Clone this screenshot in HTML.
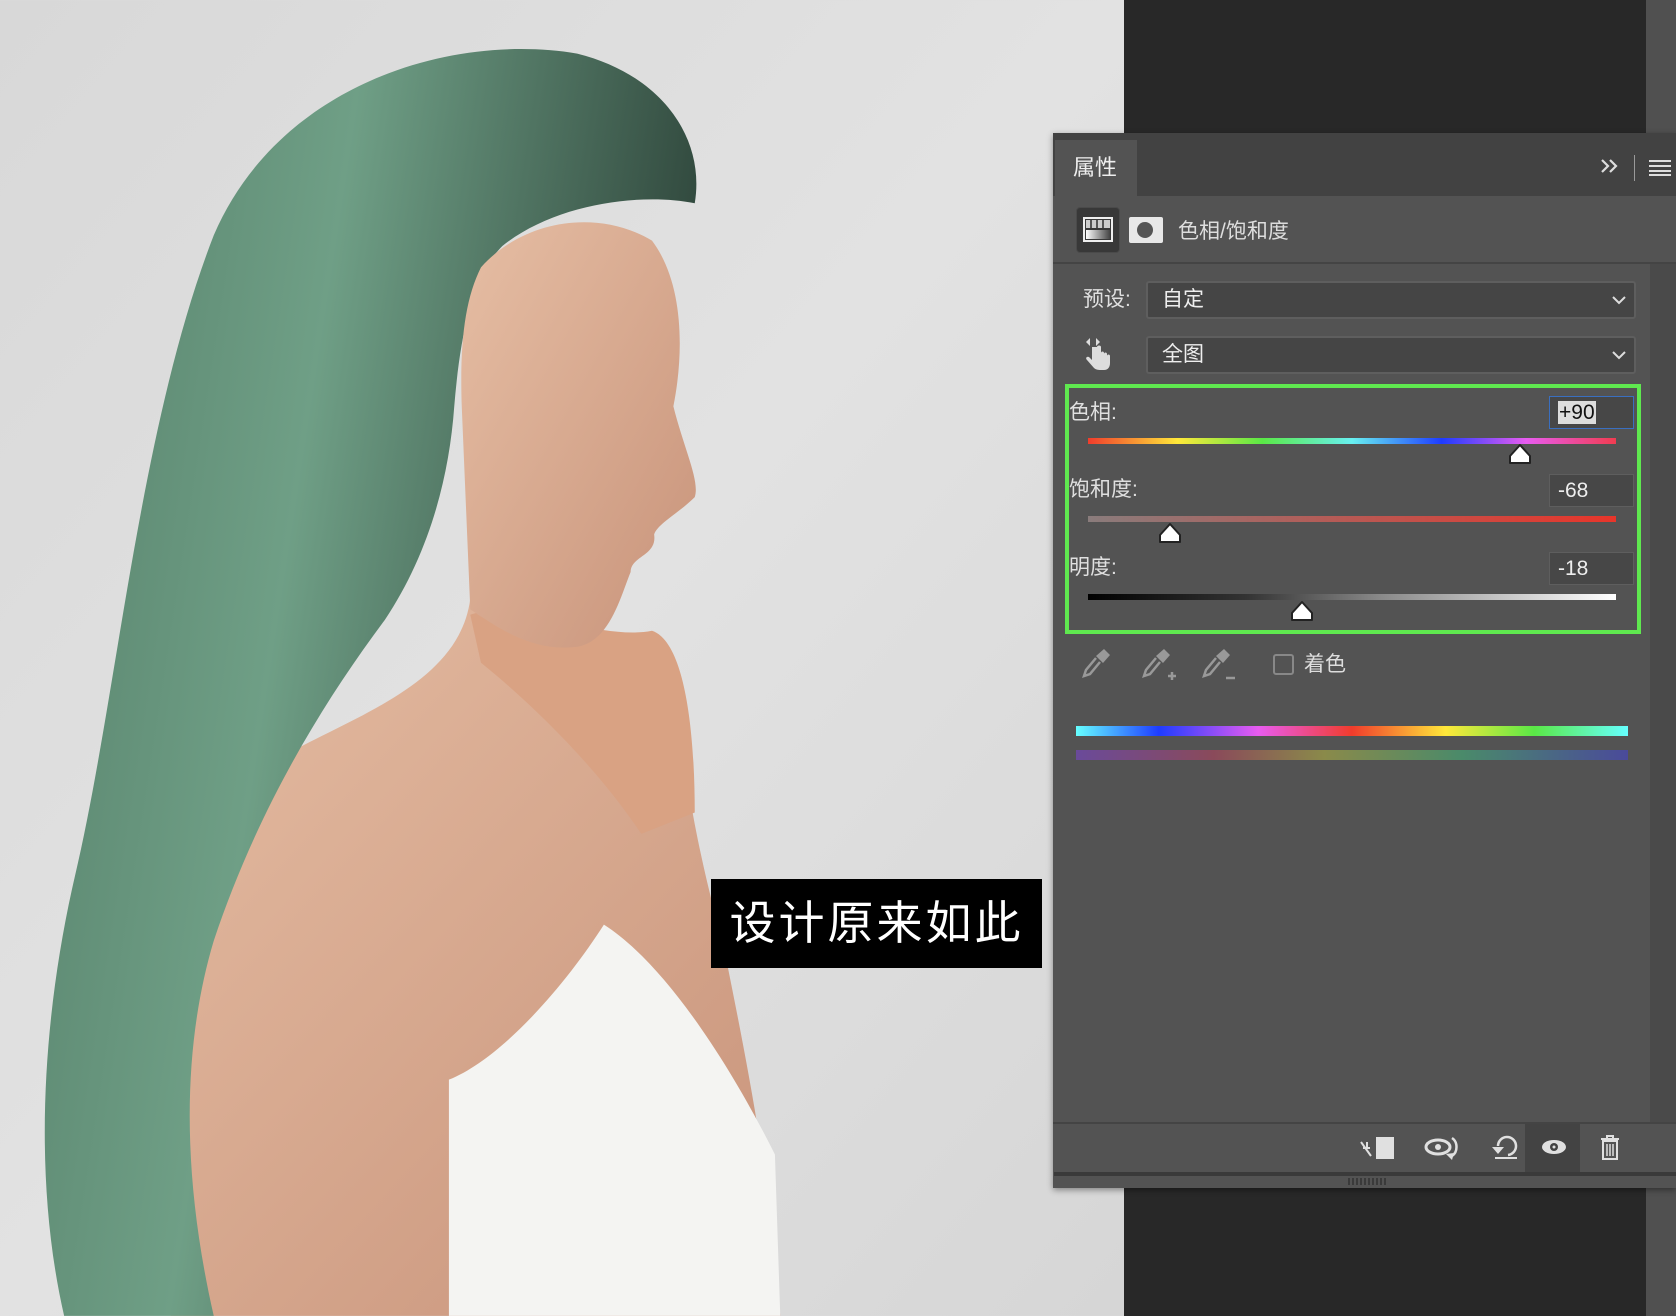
<!DOCTYPE html>
<html><head><meta charset="utf-8">
<style>
*{margin:0;padding:0;box-sizing:border-box}
body{width:1676px;height:1316px;overflow:hidden;position:relative;background:#dedede;font-family:"Liberation Sans","Noto Sans CJK SC",sans-serif;color:#e0e0e0}
.abs{position:absolute}
.dd{position:absolute;left:1146px;width:490px;height:38px;background:#454545;border:2px solid #5e5e5e;border-radius:3px;font-size:21px;color:#eee;padding-left:14px;line-height:34px}
.dd svg{position:absolute;right:8px;top:13px}
.lbl{position:absolute;left:1069px;font-size:21px;line-height:24px;color:#e0e0e0}
.inp{position:absolute;left:1549px;width:85px;height:33px;background:#474747;border:1px solid #5e5e5e;font-size:21px;line-height:31px;padding-left:8px;color:#eee}
.sl{position:absolute;left:1088px;width:528px;height:6px}
.th{position:absolute;width:24px;height:22px}
</style></head><body>
<svg class="abs" style="left:0;top:0" width="1124" height="1316" viewBox="0 0 1051.6 1231">
<defs>
<linearGradient id="bg" x1="0" y1="0" x2="1" y2="1"><stop offset="0" stop-color="#d8d8d8"/><stop offset="0.5" stop-color="#e2e2e2"/><stop offset="1" stop-color="#d6d6d6"/></linearGradient>
<linearGradient id="hair" x1="0" y1="0" x2="1" y2="0.3"><stop offset="0" stop-color="#557f69"/><stop offset="0.45" stop-color="#6f9f86"/><stop offset="1" stop-color="#2c4238"/></linearGradient>
<linearGradient id="skin" x1="0" y1="0" x2="1" y2="1"><stop offset="0" stop-color="#e6bea4"/><stop offset="1" stop-color="#c8937a"/></linearGradient>
</defs>
<rect width="1052" height="1231" fill="url(#bg)"/>
<path d="M440 560 C430 640 330 670 260 710 C170 760 130 850 110 960 C100 1080 130 1180 160 1231 L730 1231 C720 1100 700 1000 680 900 C660 820 645 760 640 700 C630 640 610 600 580 600 Z" fill="url(#skin)"/>
<path d="M440 575 C480 560 560 600 610 590 C640 600 650 680 650 760 L600 780 C560 720 500 660 450 620 Z" fill="#d9a283"/>
<path d="M200 220 C260 80 420 30 540 50 C620 70 660 130 650 190 C600 180 520 190 470 230 C440 260 430 320 425 380 C420 450 400 520 360 580 C300 660 240 760 200 880 C170 980 170 1100 200 1231 L60 1231 C30 1100 40 950 70 820 C110 650 130 400 200 220 Z" fill="url(#hair)"/>
<path d="M450 250 C490 205 560 195 610 225 C640 265 640 330 630 380 C640 420 655 450 650 465 C635 480 615 490 612 500 C615 520 590 520 590 535 C580 560 570 600 540 605 C500 610 470 590 440 570 L432 380 C430 320 435 280 450 250 Z" fill="url(#skin)"/>
<path d="M420 1010 C470 990 530 920 565 865 C620 900 680 990 725 1080 L730 1231 L420 1231 Z" fill="#f4f4f2"/>
</svg>
<div class="abs" style="left:711px;top:879px;width:331px;height:89px;background:#000;color:#fff;font-size:46px;line-height:89px;text-align:center;letter-spacing:3px">设计原来如此</div>
<div class="abs" style="left:1124px;top:0;width:522px;height:133px;background:#282828"></div>
<div class="abs" style="left:1646px;top:0;width:30px;height:133px;background:#505050"></div>
<div class="abs" style="left:1124px;top:1188px;width:522px;height:128px;background:#282828"></div>
<div class="abs" style="left:1646px;top:1188px;width:30px;height:128px;background:#505050"></div>
<!-- panel -->
<div class="abs" style="left:1053px;top:133px;width:623px;height:1055px;background:#535353;box-shadow:0 2px 6px rgba(0,0,0,.4)"></div>
<div class="abs" style="left:1053px;top:133px;width:623px;height:63px;background:#424242"></div>
<div class="abs" style="left:1055px;top:140px;width:82px;height:56px;background:#535353;font-size:22px;line-height:56px;padding-left:18px;color:#eee">属性</div>
<svg class="abs" style="left:1600px;top:158px" width="20" height="16"><path d="M2 2l6 6-6 6M10 2l6 6-6 6" stroke="#ddd" stroke-width="2.2" fill="none"/></svg>
<div class="abs" style="left:1634px;top:155px;width:1px;height:26px;background:#999"></div>
<svg class="abs" style="left:1649px;top:160px" width="22" height="16"><path d="M0 1h22M0 6h22M0 11h22M0 15h22" stroke="#ddd" stroke-width="2"/></svg>
<div class="abs" style="left:1053px;top:262px;width:623px;height:2px;background:#444"></div>
<div class="abs" style="left:1076px;top:207px;width:44px;height:46px;background:#383838;border:1px solid #4a4a4a;border-radius:4px"></div>
<svg class="abs" style="left:1083px;top:217px" width="30" height="25"><defs><linearGradient id="g1" x1="0" x2="1"><stop offset="0" stop-color="#fff"/><stop offset="1" stop-color="#444"/></linearGradient></defs><rect x="1" y="1" width="28" height="23" fill="none" stroke="#eee" stroke-width="2"/><rect x="3" y="3" width="24" height="8" fill="#ccc"/><path d="M8 3v8M14 3v8M20 3v8" stroke="#555" stroke-width="2"/><rect x="3" y="13" width="24" height="9" fill="url(#g1)"/></svg>
<div class="abs" style="left:1129px;top:217px;width:34px;height:26px;background:#e8e8e8;border-radius:2px"></div>
<div class="abs" style="left:1137px;top:222px;width:16px;height:16px;background:#555;border-radius:50%"></div>
<div class="abs" style="left:1178px;top:219px;font-size:21px;line-height:26px;color:#ddd">色相/饱和度</div>
<div class="abs" style="left:1650px;top:264px;width:26px;height:859px;background:#4a4a4a"></div>
<div class="lbl" style="left:1083px;top:288px">预设:</div>
<div class="dd" style="top:281px">自定<svg width="14" height="9"><path d="M1 1l6 6 6-6" stroke="#ddd" stroke-width="2" fill="none"/></svg></div>
<svg class="abs" style="left:1083px;top:336px" width="32" height="36"><path d="M3 6l4-4v8zM17 6l-4-4v8z" fill="#ddd"/><path d="M9 11v13l-3-3c-2-1-4 1-2 3l7 8c2 2 5 2 8 2h2c4 0 6-3 6-7v-7c0-2-3-2-3 0v-2c0-2-3-2-3 0v-1c0-2-3-2-3 0v-6c0-2-4-2-4 0z" fill="#ddd"/></svg>
<div class="dd" style="top:336px">全图<svg width="14" height="9"><path d="M1 1l6 6 6-6" stroke="#ddd" stroke-width="2" fill="none"/></svg></div>
<div class="abs" style="left:1065px;top:384px;width:576px;height:250px;border:4px solid #5fe84f"></div>
<div class="lbl" style="top:401px">色相:</div>
<div class="inp" style="top:396px;border-color:#3a6fc0"><span style="background:#ddd;color:#111;padding:0 1px">+90</span></div>
<div class="sl" style="top:438px;background:linear-gradient(90deg,#f03c2c,#ffe83a 17%,#5ae846 33%,#68f0f0 50%,#1e3cff 67%,#e85cf0 83%,#f03c50)"></div>
<svg class="th" style="left:1508px;top:443px"><path d="M12 2L22 13V20H2V13Z" fill="#fff" stroke="#222" stroke-width="2" stroke-linejoin="round"/></svg>
<div class="lbl" style="top:478px">饱和度:</div>
<div class="inp" style="top:474px">-68</div>
<div class="sl" style="top:516px;background:linear-gradient(90deg,#8a7c7c,#e8352a)"></div>
<svg class="th" style="left:1158px;top:522px"><path d="M12 2L22 13V20H2V13Z" fill="#fff" stroke="#222" stroke-width="2" stroke-linejoin="round"/></svg>
<div class="lbl" style="top:556px">明度:</div>
<div class="inp" style="top:552px">-18</div>
<div class="sl" style="top:594px;background:linear-gradient(90deg,#000,#333 30%,#888 55%,#fff)"></div>
<svg class="th" style="left:1290px;top:600px"><path d="M12 2L22 13V20H2V13Z" fill="#fff" stroke="#222" stroke-width="2" stroke-linejoin="round"/></svg>
<svg class="abs" style="left:1082px;top:648px" width="180" height="36"><g fill="none" stroke="#999" stroke-width="2.5"><path d="M14 10l-10 12-2 6 6-2 10-12"/><path d="M74 10l-10 12-2 6 6-2 10-12M86 28h8M90 24v8"/><path d="M134 10l-10 12-2 6 6-2 10-12M144 30h9"/></g><path d="M14 8l8-7 6 6-7 8zM74 8l8-7 6 6-7 8zM134 8l8-7 6 6-7 8z" fill="#999"/></svg>
<div class="abs" style="left:1273px;top:654px;width:21px;height:21px;border:2px solid #888;border-radius:3px"></div>
<div class="abs" style="left:1304px;top:652px;font-size:21px;line-height:26px;color:#ddd">着色</div>
<div class="abs" style="left:1076px;top:726px;width:552px;height:10px;background:linear-gradient(90deg,#6ff,#1e3cff 15%,#e85cf0 33%,#f03c2c 50%,#ffe83a 67%,#5ae846 83%,#6ff)"></div>
<div class="abs" style="left:1076px;top:750px;width:552px;height:10px;background:linear-gradient(90deg,#6a4a9a,#8a4a5a 25%,#8a8a4a 45%,#4a8a6a 70%,#4a4a9a)"></div>
<div class="abs" style="left:1053px;top:1122px;width:623px;height:2px;background:#444"></div>
<div class="abs" style="left:1525px;top:1124px;width:55px;height:48px;background:#434343"></div>
<div class="abs" style="left:1054px;top:1172px;width:622px;height:4px;background:#3a3a3a"></div>
<svg class="abs" style="left:1358px;top:1134px" width="270" height="30">
<g fill="#e0e0e0" stroke="#e0e0e0">
<rect x="18" y="3" width="18" height="22" stroke="none"/>
<path d="M3 8l10 14M5 14h7M9 8v6" stroke-width="2" fill="none"/>
<ellipse cx="80" cy="13" rx="12" ry="7" fill="none" stroke-width="3"/><circle cx="80" cy="13" r="3" stroke="none"/>
<path d="M94 4c6 4 6 14 0 18" fill="none" stroke-width="2.5"/><path d="M88 20l6 6 2-7z" stroke="none"/>
<path d="M137 24h22" stroke-width="2"/><path d="M140 12a9 9 0 1 1 10 9" fill="none" stroke-width="2.5"/><path d="M134 13h12l-6 7z" stroke="none"/>
<ellipse cx="196" cy="13" rx="12" ry="7" stroke="none"/><circle cx="196" cy="13" r="4" fill="#434343" stroke="none"/><circle cx="196" cy="13" r="1.5" fill="#e0e0e0" stroke="none"/>
<path d="M243 5h18M249 5v-3h6v3" fill="none" stroke-width="2"/><rect x="245" y="7" width="14" height="18" fill="none" stroke-width="2"/><path d="M249 10v12M252 10v12M255 10v12" stroke-width="1.5"/>
</g></svg>
<div class="abs" style="left:1348px;top:1178px;width:38px;height:7px;background:repeating-linear-gradient(90deg,#3a3a3a 0 2px,transparent 2px 4px)"></div>
</body></html>
